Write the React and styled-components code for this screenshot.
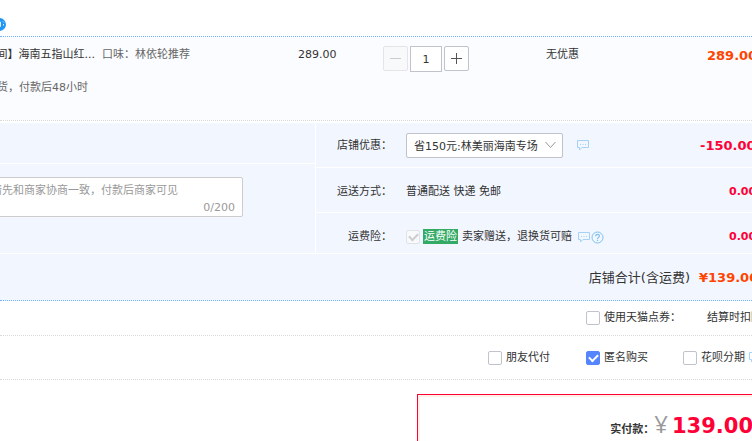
import React, { useState } from 'react';
import styled, { createGlobalStyle } from 'styled-components';

const GlobalStyle = createGlobalStyle`
  * {
    box-sizing: border-box;
  }

  body {
    margin: 0;
    overflow-x: hidden;
    background: #fff;
    color: #333;
    font: 11px/16px 'DejaVu Sans', 'Noto Sans CJK SC', sans-serif;
  }

  button, input, select, textarea {
    margin: 0;
    font: inherit;
    color: inherit;
  }
`;

const Page = styled.main`
  overflow: hidden;
`;

const ShopHeader = styled.header`
  height: 37px;
  padding-top: 18px;
  border-bottom: 1px dotted #6fb1ff;
`;

const ShopIcon = styled.svg`
  display: block;
  width: 6px;
  height: 13px;
`;

const ItemRow = styled.section`
  display: grid;
  grid-template-columns: minmax(0, 1fr) 85px 163px 161px 45px;
  height: 84px;
  padding-top: 9px;
  background: #fbfcff;
  border-bottom: 1px dotted #d9d9d9;
  line-height: 18px;
`;

const Product = styled.div`
  display: flex;
  flex-direction: column;
  gap: 15px;
`;

const ProductLine = styled.div`
  display: flex;
  gap: 7px;
`;

const ClippedText = styled.span`
  display: flex;
  justify-content: flex-end;
  width: ${props => props.$width}px;
  overflow: hidden;
  white-space: nowrap;
  color: ${props => props.$muted ? '#666' : '#333'};
`;

const Sku = styled.span`
  color: #666;
`;

const Stepper = styled.div`
  display: flex;
  gap: 2px;
`;

const StepButton = styled.button`
  display: flex;
  align-items: center;
  justify-content: center;
  width: 25px;
  height: 25px;
  padding: 0;
  background: #fff;
  border: 1px solid #c0c2cc;
  border-radius: 2px;
  color: #555;

  &:disabled {
    background: #f8f9fb;
    border-color: #e5e5e5;
    color: #ccc;
  }
`;

const Quantity = styled.input`
  width: 32px;
  height: 26px;
  padding: 0;
  background: #fff;
  border: 1px solid #c0c2cc;
  text-align: center;
`;

const Price = styled.strong`
  white-space: nowrap;
  font-size: ${props => props.$small ? '11px' : '13px'};
  color: ${props => props.$orange ? '#ff4400' : '#ff0036'};
`;

const ItemPrice = styled(Price)`
  line-height: 20px;
`;

const Panel = styled.section`
  display: grid;
  grid-template-columns: minmax(0, 1fr) 436px;
  gap: 1px;
  margin-top: 2px;
  background: #fff;
`;

const PanelColumn = styled.div`
  display: grid;
  grid-template-rows: ${props => props.$rows};
  gap: 1px;
`;

const PanelCell = styled.div`
  background: #f2f6ff;
`;

const MessageCell = styled(PanelCell)`
  padding: 13px 72px 0 0;
  overflow: hidden;
`;

const MessageBox = styled.label`
  display: block;
  height: 40px;
  margin-left: -18px;
  padding: 5px 7px 0 8px;
  background: #fff;
  border: 1px solid #ccc;
  border-radius: 2px;
  color: #999;
`;

const Message = styled.textarea`
  display: block;
  width: 100%;
  height: 17px;
  padding: 0;
  border: 0;
  outline: 0;
  resize: none;
  overflow: hidden;
  background: none;

  &::placeholder {
    color: #999;
  }
`;

const Counter = styled.span`
  display: block;
  text-align: right;
`;

const OptionRow = styled(PanelCell)`
  display: grid;
  grid-template-columns: 76px minmax(0, 1fr) ${props => props.$priceWidth}px;
  column-gap: 14px;
  align-items: center;
  padding-top: ${props => props.$drop || 0}px;
`;

const OptionLabel = styled.label`
  text-align: right;
  white-space: nowrap;
`;

const OptionValue = styled.div`
  display: flex;
  align-items: center;
  white-space: nowrap;
`;

const SelectBox = styled.div`
  position: relative;
  width: 157px;
  margin-right: 14px;

  svg {
    position: absolute;
    top: 8px;
    right: 7px;
    pointer-events: none;
  }
`;

const Select = styled.select`
  display: block;
  width: 100%;
  height: 25px;
  padding: 2px 18px 0 7px;
  appearance: none;
  background: #fff;
  border: 1px solid #c0c2cc;
  border-radius: 2px;
`;

const CheckInput = styled.input`
  display: grid;
  flex: none;
  place-items: center;
  width: 14px;
  height: 14px;
  appearance: none;
  background: #fff;
  border: 1px solid #c0c2cc;
  border-radius: 2px;

  &:checked {
    background: #5584ff;
    border-color: #5584ff;
  }

  &:checked::before {
    content: '';
    width: 7px;
    height: 4px;
    margin-bottom: 2px;
    border: solid #fff;
    border-width: 0 0 2px 2px;
    transform: rotate(-45deg);
  }

  &:disabled {
    background: #f8f9fb;
    border-color: #e0e2e6;
  }

  &:disabled::before {
    border-color: #ccc;
  }
`;

const InsuranceTag = styled.span`
  margin: 0 4px 2px 3px;
  padding: 0 1px;
  line-height: 15px;
  background: #33aa66;
  color: #fff;
`;

const Icon = styled.svg`
  flex: none;
`;

const Icons = styled.span`
  display: flex;
  align-items: center;
  gap: 1px;
  margin-left: 6px;
`;

const ShopTotal = styled(PanelCell)`
  display: flex;
  grid-column: 1 / -1;
  align-items: center;
  justify-content: flex-end;
  height: 47px;
  padding-top: 2px;
  border-bottom: 1px dotted #6fb1ff;
`;

const TotalLabel = styled.span`
  margin-right: 9px;
  font-size: 13px;
`;

const TotalPrice = styled(Price)`
  width: 53px;
`;

const ChoiceRow = styled.section`
  display: grid;
  grid-template-columns: ${props => props.$columns};
  align-items: center;
  height: ${props => props.$height}px;
  border-bottom: 1px dotted #d9d9d9;
  line-height: 18px;
  white-space: nowrap;
`;

const Choice = styled.label`
  display: flex;
  align-items: center;
  gap: 4px;

  &:first-child {
    grid-column-start: 2;
  }
`;

const PayBox = styled.section`
  display: flex;
  align-items: baseline;
  justify-content: flex-end;
  width: 336px;
  height: 64px;
  margin: 14px -1px 0 auto;
  padding-top: 15px;
  border: 1px solid #ff0036;
  box-shadow: inset 2px 2px 0 #fff0e8;
  line-height: 28px;
  white-space: nowrap;
`;

const PayLabel = styled.span`
  font-weight: 700;
`;

const Currency = styled.span`
  font: 400 24px/28px 'Open Sans', 'Noto Sans', sans-serif;
  color: #999;
`;

const PayAmount = styled.strong`
  width: 80px;
  margin-left: 4px;
  font-size: 21px;
  color: #ff0036;
`;

const CommentIcon = () => (
  <Icon width="12" height="11" viewBox="0 0 12 11" fill="none" stroke="#a6d3f5" aria-hidden="true">
    <path d="M.5.5h11v7H5L2.5 10V7.500h-2z" />
    <path d="M3 4.500h1M5.500 4.500h1M8 4.500h1" />
  </Icon>
);

const HelpIcon = () => (
  <Icon width="13" height="13" viewBox="0 0 13 13" fill="none" stroke="#7cc0f2" aria-hidden="true">
    <circle cx="6.500" cy="6.500" r="5.500" />
    <path d="M4.700 5.200c0-2.600 3.800-2.400 3.700-.2 0 1.400-1.900 1.400-1.900 3M6.500 8.700v1.200" strokeWidth="1.200" />
  </Icon>
);

const Check = ({ label, checked = false, children }) => (
  <Choice>
    <CheckInput type="checkbox" defaultChecked={checked} />
    {label}
    {children}
  </Choice>
);

const App = () => {
  const [quantity, setQuantity] = useState(1);
  const [message, setMessage] = useState('');

  return (
    <Page>
      <GlobalStyle />

      <ShopHeader>
        <ShopIcon viewBox="6 0 6 13">
          <circle cx="5.500" cy="6.500" r="6.500" fill="#2196f3" />
          <path d="M5 4h1.500v4.500H5M9 3.500l1 1M9.500 6v1.500" fill="none" stroke="#d6eeff" />
        </ShopIcon>
      </ShopHeader>

      <ItemRow>
        <Product>
          <ProductLine>
            <ClippedText $width={95}>间】海南五指山红...</ClippedText>
            <Sku>口味：林依轮推荐</Sku>
          </ProductLine>
          <ClippedText $width={88} $muted>货，付款后48小时</ClippedText>
        </Product>
        <span>289.00</span>
        <Stepper>
          <StepButton
            type="button"
            aria-label="减少"
            disabled={quantity <= 1}
            onClick={() => setQuantity(quantity - 1)}
          >
            <svg width="13" height="13" stroke="currentColor"><path d="M1 6.500h11" /></svg>
          </StepButton>
          <Quantity
            aria-label="数量"
            value={quantity}
            onChange={e => setQuantity(Number(e.target.value) || 1)}
          />
          <StepButton type="button" aria-label="增加" onClick={() => setQuantity(quantity + 1)}>
            <svg width="13" height="13" stroke="currentColor"><path d="M1 6.500h11M6.500 1v11" /></svg>
          </StepButton>
        </Stepper>
        <span>无优惠</span>
        <ItemPrice $orange>289.00</ItemPrice>
      </ItemRow>

      <Panel>
        <PanelColumn $rows="40px 89px">
          <PanelCell />
          <MessageCell>
            <MessageBox>
              <Message
                aria-label="留言"
                maxLength={200}
                placeholder="请先和商家协商一致，付款后商家可见"
                value={message}
                onChange={e => setMessage(e.target.value)}
              />
              <Counter>{message.length}/200</Counter>
            </MessageBox>
          </MessageCell>
        </PanelColumn>

        <PanelColumn $rows="44px 44px 40px">
          <OptionRow $priceWidth={52} $drop={1}>
            <OptionLabel htmlFor="coupon">店铺优惠：</OptionLabel>
            <OptionValue>
              <SelectBox>
                <Select id="coupon">
                  <option>省150元:林美丽海南专场</option>
                </Select>
                <svg width="11" height="8" fill="none" stroke="#999"><path d="M.5 1l5 5.500 5-5.500" /></svg>
              </SelectBox>
              <CommentIcon />
            </OptionValue>
            <Price>-150.00</Price>
          </OptionRow>
          <OptionRow $priceWidth={23} $drop={3}>
            <OptionLabel as="span">运送方式：</OptionLabel>
            <OptionValue>普通配送 快递 免邮</OptionValue>
            <Price $small>0.00</Price>
          </OptionRow>
          <OptionRow $priceWidth={23} $drop={8}>
            <OptionLabel htmlFor="insurance">运费险：</OptionLabel>
            <OptionValue>
              <CheckInput id="insurance" type="checkbox" defaultChecked disabled />
              <InsuranceTag>运费险</InsuranceTag>
              卖家赠送，退换货可赔
              <Icons>
                <CommentIcon />
                <HelpIcon />
              </Icons>
            </OptionValue>
            <Price $small>0.00</Price>
          </OptionRow>
        </PanelColumn>

        <ShopTotal>
          <TotalLabel>店铺合计(含运费)</TotalLabel>
          <TotalPrice $orange>¥139.00</TotalPrice>
        </ShopTotal>
      </Panel>

      <ChoiceRow $columns="minmax(0, 1fr) 121px 45px" $height={35}>
        <Check label="使用天猫点券：" />
        <span>结算时扣除</span>
      </ChoiceRow>

      <ChoiceRow $columns="minmax(0, 1fr) 98px 97px 69px" $height={44}>
        <Check label="朋友代付" />
        <Check label="匿名购买" checked />
        <Check label="花呗分期">
          <CommentIcon />
        </Check>
      </ChoiceRow>

      <PayBox>
        <PayLabel>实付款：</PayLabel>
        <Currency>¥</Currency>
        <PayAmount>139.00</PayAmount>
      </PayBox>
    </Page>
  );
};

export default App;
